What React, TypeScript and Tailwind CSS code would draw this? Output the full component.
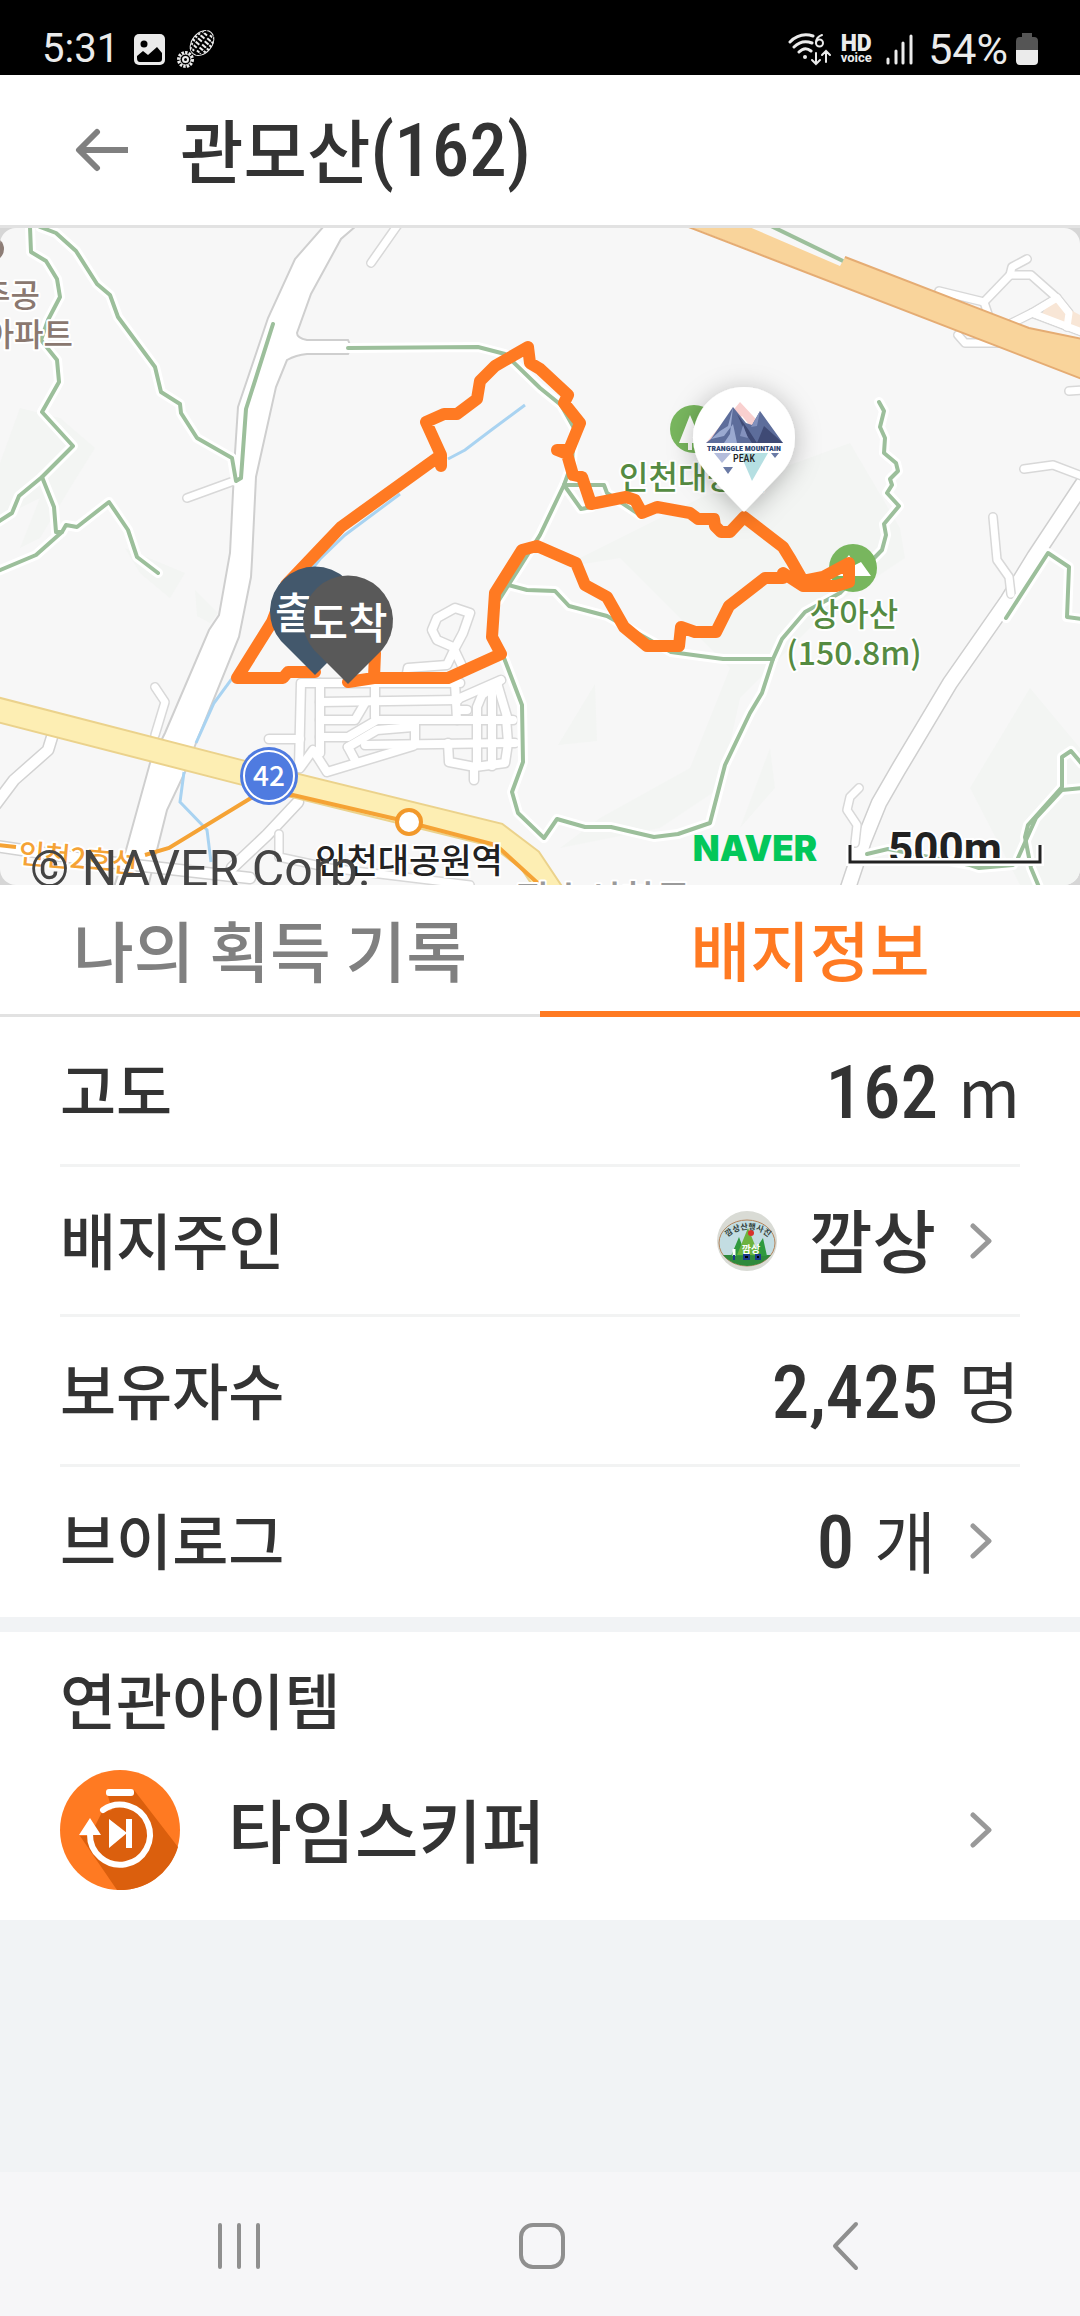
import React, { useState } from 'react';

const KR = 'font-["Noto_Sans_CJK_KR",sans-serif]';

// halo + line pairs of the hiking trails
const trails = [
    '30,-1 31,24 46,33 57,51 60,69 48,92 41,112 57,132 59,154 42,184 73,218 42,249 19,268 12,285 -2,294',
    '42,249 54,279 56,304 62,304 66,297 77,299 109,274 128,302 137,329 158,345',
    '62,304 36,327 -2,343',
    '40,-1 56,5 76,23 97,56 110,67 118,89 155,139 161,164 180,176 181,185 197,210 232,230 236,253 241,250 246,181 273,96',
    '348,120 478,119 505,126 540,160 561,177 574,200 572,235 564,257 540,307 499,372',
    '592,279 581,281 564,257 604,257 607,265 640,287',
    '508,357 527,362 555,363 569,378 607,388 671,424 723,431 773,431',
    '879,174 884,183 880,199 885,210 884,225 896,235 898,243 890,251 892,257 887,265 899,278 884,296 886,307 882,322 840,365 805,384 782,411 773,431 762,465 750,485 725,537 710,595 678,606 654,609 611,599 585,599 557,591 544,610 518,585 512,564 523,534 522,477 504,430',
    '1006,390 1048,325 1069,339 1067,389 1082,391',
    '1082,536 1071,523 1062,529 1062,559 1028,597 1025,609 1031,640 1039,659',
    '1082,560 1062,562 1036,590 1018,630',
    '867,626 888,621 970,637 979,640 1013,637',
];

const smallRoads = [
    '397,-2 371,35',
    '231,254 187,270',
    '155,459 165,474 155,507',
    '939,63 984,74 1010,47 1012,39 1027,31',
    '984,74 988,86',
    '1010,47 1031,47 1057,70 1069,85 1067,99',
    '1057,70 1032,85 1006,98',
    '1032,85 1082,104',
    '958,107 965,115 1000,115',
    '1069,163 1082,162',
    '1024,241 1053,237 1082,248',
    '993,289 997,332 1009,349 1011,366',
    '859,560 850,569 847,582 857,597 855,615',
    '279,606 279,629 330,640 470,657',
];

const village = [
    '299,540 301,455 460,455',
    '320,455 320,525',
    '320,474 458,472',
    '375,455 375,489',
    '320,492 355,492 365,475',
    '320,509 348,509 377,492 513,492',
    '269,511 300,511',
    '455,455 457,492',
    '300,540 313,522 327,544 413,518',
    '348,519 356,534',
    '348,519 377,502 413,499',
    '415,495 415,516',
    '365,517 515,515',
    '448,515 449,534 475,539 505,535 508,515 506,490',
    '474,539 474,552',
    '477,538 477,479 482,467 498,455',
    '492,538 492,465',
    '457,482 467,482',
    '501,452 460,470',
    '406,450 408,440 447,437 455,420 463,405 470,385 455,380 437,390 432,402 437,412 453,419 463,440',
    '497,455 508,492',
];

const route =
    'M315 444 288 444 283 450 237 450 272 394 286 357 324 317 341 299 441 227 441 238 441 227 426 194 444 186 457 186 477 171 480 153 495 138 528 119 530 135 540 141 568 167 564 175 580 195 569 222 557 222 567 226 573 247 582 249 591 276 626 269 635 272 642 285 657 279 690 285 698 291 714 291 715 298 721 304 730 304 744 289 783 319 791 332 803 353 823 349 849 335 849 354 836 358 803 358 783 345 783 350 765 350 729 378 716 404 695 404 681 399 679 418 647 418 624 399 607 369 585 357 576 335 537 318 522 322 495 365 492 409 501 426 448 450 374 450 375 425 374 450 348 454';

const Lines: React.FC<{ items: string[]; color: string; width: number }> = ({ items, color, width }) => (
    <g fill="none" stroke={color} strokeWidth={width} strokeLinejoin="round" strokeLinecap="round">
        {items.map((points) => (
            <polyline key={points} points={points} />
        ))}
    </g>
);

const TrailMap: React.FC = () => (
    <svg viewBox="0 0 1080 657" className={`block w-full rounded-2xl bg-[#f7f7f7] ${KR}`} role="img" aria-label="관모산 지도">
        <defs>
            <filter id="pinShadow" x="-50%" y="-50%" width="200%" height="200%">
                <feDropShadow dx="0" dy="4" stdDeviation="13" floodColor="#000" floodOpacity="0.28" />
            </filter>
        </defs>

        <g fill="#f3f5f3">
            <path d="M20 180 60 190 95 220 70 260 40 310 20 320 40 270 0 290V235Z" />
            <path d="M125 320 185 345 170 370 140 345ZM195 362 218 385 210 395 197 388Z" />
            <path d="M700 270 850 215 900 300 905 330 830 380 740 470 720 560 660 600 560 620 600 590 690 540 730 440 620 330 560 340Z" />
            <path d="M558 517 595 456 597 513ZM740 600 770 520 775 560Z" />
            <path d="M1015 485 1030 460 1080 520V657H1020L970 560Z" />
        </g>

        {/* main road */}
        <path
            d="M324 -2 295 31 268 90 238 179 235 225 233 264 230 325 219 387 209 402 165 505 150 535 126 622 114 659H148L157 622 167 582 186 542 196 515 239 409 251 349 252 332 256 249 276 159 287 132Q296 127 307 126H348Q352 119 348 112H307Q297 110 297 105L311 66 341 11 356 -2Z"
            fill="#fff"
            stroke="#cfcfcf"
            strokeWidth="2"
        />
        <Lines items={['52,509 48,522 14,552 -4,576', '298,574 267,607 232,640', '-4,618 90,632 250,650']} color="#d2d2d2" width={13} />
        <Lines items={['52,509 48,522 14,552 -4,576', '298,574 267,607 232,640', '-4,618 90,632 250,650']} color="#fff" width={10} />
        <Lines items={['1084,254 1035,328 1008,372 950,455 898,542 879,575 864,612 848,660']} color="#cfcfcf" width={17} />
        <Lines items={['1084,254 1035,328 1008,372 950,455 898,542 879,575 864,612 848,660']} color="#fff" width={14} />
        <Lines items={smallRoads} color="#d8d8d8" width={10} />
        <Lines items={smallRoads} color="#fff" width={7} />
        <Lines items={village} color="#d8d8d8" width={11} />
        <Lines items={village} color="#fff" width={8} />

        {/* highways */}
        <path d="M1052 72 1082 88V104L1040 88Z" fill="#f8e6d6" />
        <Lines items={['1057,70 1069,85 1067,99', '1057,70 1032,85 1006,98', '1032,85 1082,104']} color="#fff" width={7} />
        <path d="M688 -2 747 -2 840 38 845 29 1029 100 1082 111V151Z" fill="#f9d49b" />
        <path d="M686 -2 1082 151M845 29 1029 100 1082 111" fill="none" stroke="#e5ac73" strokeWidth="2" />
        <path d="M-5 481 240 544 497 607 530 632 552 665" fill="none" stroke="#ebd28c" strokeWidth="26" />
        <path d="M-5 481 240 544 497 607 530 632 552 665" fill="none" stroke="#fdeeb3" strokeWidth="22" />

        <g fill="none" stroke="#a9d3f1" strokeWidth="3">
            <path d="M525 177 490 203 465 222 448 231M400 266 345 307 320 331 272 392 231 452 214 475 196 515M184 544 180 574 207 602 211 634" />
        </g>

        <Lines items={trails} color="#fff" width={10} />
        <Lines items={trails} color="#9cbf9b" width={4} />
        <path d="M771 -2 843 33" stroke="#9cbf9b" strokeWidth="4" />

        {/* subway line 2 */}
        <path d="M-2 617 16 619M145 627 169 620 251 570 293 567 396 591 496 617 542 659" fill="none" stroke="#f5a335" strokeWidth="4" />
        <circle cx="409" cy="594" r="12" fill="#fff" stroke="#f2992b" strokeWidth="4" />

        <circle cx="269" cy="548" r="29" fill="#4f7be0" />
        <circle cx="269" cy="548" r="25" fill="none" stroke="#fff" strokeWidth="2" />
        <text x="269" y="558" textAnchor="middle" className="text-[28px] font-medium" fill="#fff">42</text>

        <circle cx="-8" cy="21" r="12" fill="#8d7d76" />
        <g stroke="#fff" strokeWidth="4" strokeLinejoin="round" paintOrder="stroke" className="text-[32px] font-medium">
            <text x="40" y="79" textAnchor="end" fill="#8a7870">주공</text>
            <text x="73" y="118" textAnchor="end" fill="#8a7870">아파트</text>
            <text x="619" y="261" fill="#558b42">인천대공원</text>
            <text x="854" y="398" textAnchor="middle" fill="#558b42">상아산</text>
            <text x="854" y="437" textAnchor="middle" fill="#558b42">(150.8m)</text>
            <text x="18" y="635" fill="#f5a335" transform="rotate(5 18 635)" className="text-[28px]">인천2호선</text>
            <text x="516" y="685" fill="#9a9a9a" className="text-[38px]">장수서창동</text>
        </g>

        <circle cx="694" cy="201" r="24" fill="#78b65e" />
        <path d="M690 187 679 215H688V222H692V215H702Z" fill="#fff" />
        <circle cx="853" cy="340" r="24" fill="#78b65e" />
        <path d="M832 348 849 327 855 337 861 334 871 348Z" fill="#fff" />

        <path d={route} fill="none" stroke="#ff7a22" strokeWidth="12" strokeLinejoin="round" strokeLinecap="round" />

        {/* start and finish */}
        <path d="M315 447 281 413A45 45 0 1 1 349 413Z" fill="#43586c" />
        <text x="275" y="401" className="text-[43px] font-medium" fill="#fff">출발</text>
        <path d="M348 456 314 422A45 45 0 1 1 382 422Z" fill="#595959" />
        <text x="348" y="411" textAnchor="middle" className="text-[43px] font-medium" fill="#fff">도착</text>

        {/* peak badge */}
        <path d="M744 284 706 244A51 51 0 1 1 782 244Z" fill="#fff" filter="url(#pinShadow)" />
        <path d="M740 174 706 215H720L742 188 756 205 766 202Z" fill="#f9d0cf" />
        <path d="M733 179 711 211 706 215H783L760 183 752 197 746 195Z" fill="#5d6d9b" />
        <path d="M733 179 728 198 720 203 711 211 724 208 733 196 737 215H724L730 206Z" fill="#9aa9d0" />
        <path d="M737 186 746 206 752 215H783L764 198 757 215 748 201Z" fill="#3f4a75" />
        <path d="M760 183 757 198 751 199ZM743 197 740 208 748 210Z" fill="#8391bd" />
        <path d="M740 225H768L752 253Z" fill="#b5dfe2" />
        <path d="M714 225H731L722 235Z" fill="#b3bcdb" />
        <path d="M723 239H733L728 246ZM771 225H779L775 230Z" fill="#6a7aa5" />
        <text x="744" y="223" textAnchor="middle" className='font-["Roboto_Condensed",Roboto] text-[8px] font-black' fill="#2d4470">TRANGGLE MOUNTAIN</text>
        <text x="744" y="234" textAnchor="middle" className='font-["Roboto_Condensed",Roboto] text-[10px] font-medium' fill="#222">PEAK</text>

        <text x="409" y="645" textAnchor="middle" className="text-[34px] font-medium" fill="#222" stroke="#fff" strokeWidth="4" paintOrder="stroke">인천대공원역</text>
        <text x="30" y="658" className="text-[50px]" fill="#444" fontFamily="Roboto">© NAVER Corp.</text>
        <text x="755" y="633" textAnchor="middle" className="text-[35px] font-black" fill="#03c75a" fontFamily="Inter">NAVER</text>
        <text x="945" y="636" textAnchor="middle" className="text-[44px] font-bold" fill="#222" stroke="#fff" strokeWidth="4" paintOrder="stroke" fontFamily="Roboto">500m</text>
        <path d="M850 617V634H1040V617" fill="none" stroke="#fff" strokeWidth="8" />
        <path d="M850 617V634H1040V617" fill="none" stroke="#222" strokeWidth="3" />
    </svg>
);

const StatusBar: React.FC = () => (
    <div className="flex h-[75px] items-end justify-between bg-black pl-[42px] pr-[42px] text-[#ebebeb]">
        <div className="flex h-[52px] items-center gap-3">
            <span className="w-[80px] font-[Roboto,sans-serif] text-[40px] leading-none">5:31</span>
            <svg width="31" height="31" viewBox="0 0 31 31">
                <rect width="31" height="31" rx="5" fill="#ebebeb" />
                <circle cx="10" cy="10" r="3.5" />
                <path d="M3 24V22L9 17 14 21 23 13 28 19V25Q28 28 25 28H6Q3 28 3 24Z" />
            </svg>
            <svg width="39" height="38" viewBox="0 0 39 38" fill="none" stroke="#ebebeb">
                <g transform="rotate(40 25 13)">
                    <ellipse cx="25" cy="13" rx="10" ry="14" strokeWidth="1" />
                    <path d="M18 4H24M16 8H24M15 12H24M15 16H24M17 20H24M19 24H24M26 2H31M26 6H34M26 10H35M26 14H35M26 18H34M26 22H31" strokeWidth="2" />
                    <path d="M21 0Q15 13 22 26M29 0Q35 13 28 26" stroke="#000" strokeWidth="1" />
                </g>
                <circle cx="8.500" cy="29.500" r="7" strokeWidth="3" strokeDasharray="2.400 1.200" />
                <circle cx="8.500" cy="29.500" r="5.500" strokeWidth="1" />
                <circle cx="8.500" cy="29.500" r="2.500" strokeWidth="2" />
            </svg>
        </div>
        <div className="flex h-[52px] items-center gap-2">
            <svg width="44" height="34" viewBox="0 0 44 34" fill="none" stroke="#ebebeb" strokeWidth="3" strokeLinecap="round">
                <path d="M2 10Q12 0 25 4M6 15Q14 7 24 11M11 20Q17 14 23 19" />
                <circle cx="17" cy="25" r="2" fill="#ebebeb" stroke="none" />
                <path d="M34 3Q28 5 28 11" strokeWidth="2" />
                <circle cx="31.500" cy="11" r="3.500" strokeWidth="2" />
                <path d="M28 21V32M24 28 28 32 32 28M38 30V19M34 23 38 19 42 23" strokeWidth="2" />
            </svg>
            <div className="mr-1 flex w-8 flex-col items-center font-[Roboto,sans-serif]">
                <span className="text-[23px] font-black leading-[18px]">HD</span>
                <span className="text-[13px] font-bold leading-[10px]">voice</span>
            </div>
            <svg width="36" height="31" viewBox="0 0 36 31" fill="none" stroke="#ebebeb" strokeWidth="3" strokeLinecap="round">
                <path d="M4 25V29M12 17V29M19 9V29M27 2V29" />
            </svg>
            <span className="font-[Roboto,sans-serif] text-[43px] leading-none">54%</span>
            <svg width="22" height="32" viewBox="0 0 22 32">
                <path d="M6 0H16V4H18Q22 4 22 8V18H0V8Q0 4 4 4H6Z" fill="#555" />
                <path d="M0 17H22V28Q22 32 18 32H4Q0 32 0 28Z" fill="#ebebeb" />
            </svg>
        </div>
    </div>
);

const Chevron: React.FC = () => (
    <svg width="24" height="38" viewBox="0 0 24 38" fill="none" stroke="#999" strokeWidth="5" strokeLinecap="round" strokeLinejoin="round">
        <path d="M5 4 21 19 5 34" />
    </svg>
);

const OwnerBadge: React.FC = () => (
    <svg width="60" height="60" viewBox="0 0 60 60" className={KR}>
        <circle cx="30" cy="30" r="30" fill="#d9dbd5" />
        <ellipse cx="30" cy="32" rx="28" ry="23" fill="#c3dde2" stroke="#b3845c" strokeWidth="1" />
        <path d="M6 44H54Q46 54 30 55 14 54 6 44Z" fill="#2f8a3c" />
        <path d="M14 45 22 26 29 45ZM34 45 46 27 50 45Z" fill="#2f9a3e" />
        <path d="M20 44 31 17 42 44Z" fill="#6db33f" />
        <circle cx="34" cy="22" r="3" fill="#d8332c" />
        <path d="M17 38V45" stroke="#fff" strokeWidth="3" />
        <path d="M17 44V49M27 44H32V48H27ZM39 44H43V48H39Z" stroke="#1c3a8c" strokeWidth="2" />
        <text x="34" y="42" textAnchor="middle" className="text-[10px] font-bold" fill="#fff">깜상</text>
        <path id="badgeArc" d="M8 30A25 19 0 0 1 54 30" fill="none" />
        <text className="text-[8px] font-bold" fill="#34423a">
            <textPath href="#badgeArc" startOffset="50%" textAnchor="middle">깜상산행사진</textPath>
        </text>
    </svg>
);

const SkipperIcon: React.FC = () => (
    <svg width="120" height="120" viewBox="0 0 120 120" className="shrink-0">
        <circle cx="60" cy="60" r="60" fill="#ff7a22" />
        <path d="M74 20 118 77A60 60 0 0 1 57 120L20 66H30L42 42 52 40 48 26Z" fill="#db5f0d" />
        <rect x="46" y="19" width="28" height="7" rx="3" fill="#fff" />
        <path d="M43 40A30 30 0 1 1 30 64" fill="none" stroke="#fff" strokeWidth="6" strokeLinecap="round" />
        <path d="M19 65 30 48 41 65ZM49 49 67 63 49 78Z" fill="#fff" />
        <rect x="66" y="49" width="6" height="29" fill="#fff" />
    </svg>
);

type InfoRowProps = {
    label: string;
    value: string;
    unit?: string;
    icon?: React.ReactNode;
    link?: boolean;
};

const NUM = 'font-["Roboto_Condensed","Noto_Sans_CJK_KR",sans-serif]';

const InfoRow: React.FC<InfoRowProps> = ({ label, value, unit, icon, link }) => {
    const Tag = link ? 'button' : 'div';
    return (
        <Tag className="flex h-[150px] w-full items-center justify-between border-b-[3px] border-[#f2f3f3] text-left last:border-transparent">
            <span className="pb-1 text-[61px] font-medium leading-none">{label}</span>
            <span className="flex items-center">
                {icon}
                {unit ? (
                    <span className={`pt-1 text-[75px] font-medium leading-none ${NUM}`}>{value}</span>
                ) : (
                    <span className="ml-8 pb-1 text-[69px] font-medium leading-none">{value}</span>
                )}
                {unit && <span className="ml-5 pb-1 text-[67px] font-normal leading-none">{unit}</span>}
                {link && <span className="ml-8 mr-7"><Chevron /></span>}
            </span>
        </Tag>
    );
};

const tabs = ['나의 획득 기록', '배지정보'];

const App: React.FC = () => {
    const [active, setActive] = useState(1);

    return (
        <div className={`flex min-h-screen flex-col bg-[#f1f3f5] text-[#333] ${KR}`}>
            <StatusBar />

            <header className="flex h-[153px] items-center border-b-[3px] border-[#e2e2e2] bg-white pl-[74px]">
                <button aria-label="뒤로">
                    <svg width="54" height="44" viewBox="0 0 54 44" fill="none" stroke="#808080" strokeWidth="6" strokeLinejoin="round">
                        <path d="M54 22H5" />
                        <path d="M23 4 5 22 23 40" strokeLinecap="round" />
                    </svg>
                </button>
                <h1 className="ml-[52px] flex items-center text-[69px] font-medium leading-none">
                    <span className="pb-1">관모산</span>
                    <span className={`text-[75px] ${NUM}`}>(162)</span>
                </h1>
            </header>

            <div className="overflow-hidden bg-[#d6d6d6]">
                <TrailMap />
            </div>

            <div role="tablist" className="grid h-[132px] grid-cols-2 bg-white">
                {tabs.map((tab, i) => (
                    <button
                        key={tab}
                        role="tab"
                        aria-selected={active === i}
                        onClick={() => setActive(i)}
                        className={
                            active === i
                                ? 'border-b-[6px] border-[#ff7a22] text-[65px] font-medium leading-none text-[#ff7a22]'
                                : 'border-b-[3px] border-[#e2e2e2] pb-1 text-[66px] font-medium leading-none text-[#808080]'
                        }
                    >
                        {tab}
                    </button>
                ))}
            </div>

            <section className="bg-white px-[60px]">
                <InfoRow label="고도" value="162" unit="m" />
                <InfoRow label="배지주인" value="깜상" icon={<OwnerBadge />} link />
                <InfoRow label="보유자수" value="2,425" unit="명" />
                <InfoRow label="브이로그" value="0" unit="개" link />
            </section>

            <section className="mt-[15px] bg-white px-[60px] pb-[30px] pt-9">
                <h2 className="text-[61px] font-medium leading-[62px]">연관아이템</h2>
                <button className="mt-10 flex w-full items-center text-left">
                    <SkipperIcon />
                    <span className="ml-12 flex-1 pb-1 text-[69px] font-medium leading-none">타임스키퍼</span>
                    <span className="mr-7"><Chevron /></span>
                </button>
            </section>

            <nav className="mt-auto grid h-[144px] grid-cols-3 bg-[#f6f6f8] pl-[88px] pr-[84px] pt-1">
                <button aria-label="최근 앱" className="flex items-center justify-center">
                    <svg width="44" height="48" viewBox="0 0 44 48" fill="none" stroke="#8f8f8f" strokeWidth="4" strokeLinecap="round">
                        <path d="M3 3V45M22 3V45M41 3V45" />
                    </svg>
                </button>
                <button aria-label="홈" className="flex items-center justify-center">
                    <svg width="48" height="48" viewBox="0 0 48 48" fill="none" stroke="#8f8f8f" strokeWidth="4">
                        <rect x="3" y="3" width="42" height="42" rx="12" />
                    </svg>
                </button>
                <button aria-label="이전" className="flex items-center justify-center">
                    <svg width="28" height="50" viewBox="0 0 28 50" fill="none" stroke="#8f8f8f" strokeWidth="4" strokeLinecap="round" strokeLinejoin="round">
                        <path d="M25 3 4 25 25 47" />
                    </svg>
                </button>
            </nav>
        </div>
    );
};

export default App;
